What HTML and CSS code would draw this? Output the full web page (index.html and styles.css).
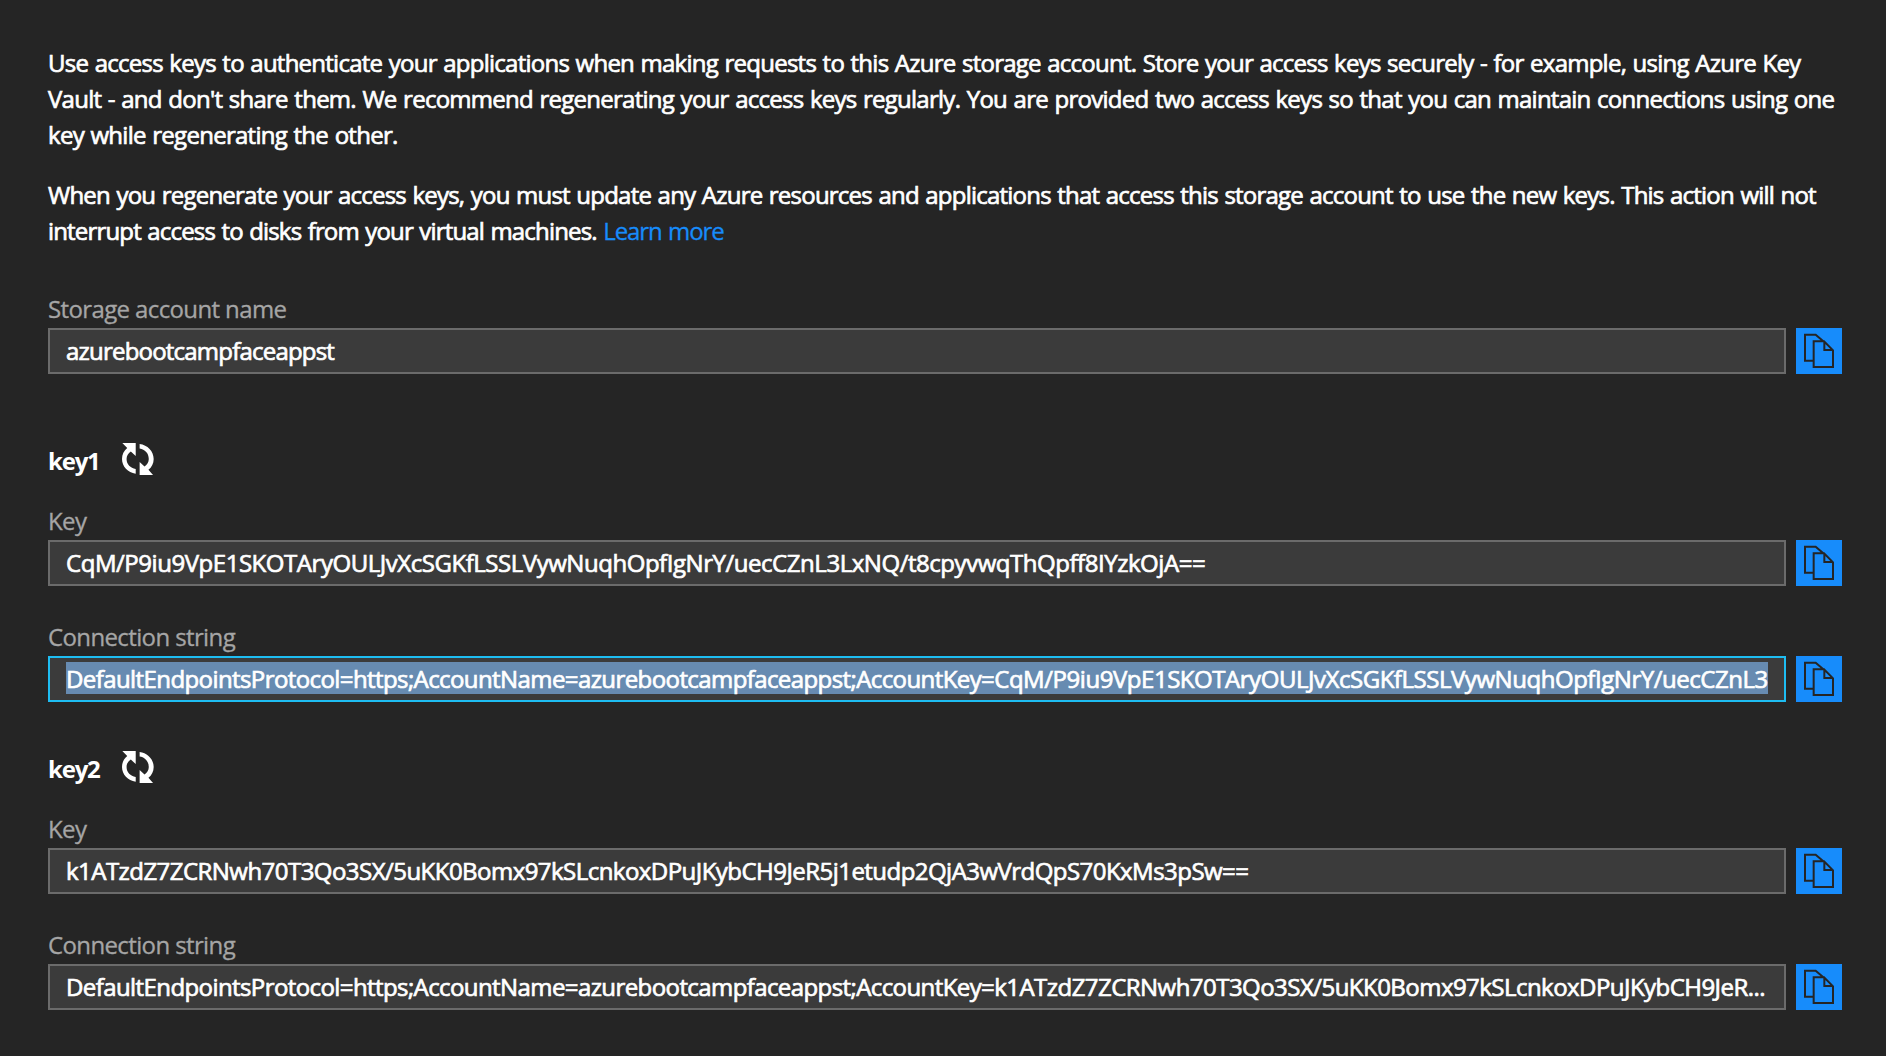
FILE: index.html
```html
<!DOCTYPE html>
<html lang="en">
<head>
<meta charset="utf-8">
<title>Access keys</title>
<link rel="stylesheet" href="styles.css">
</head>
<body>
<svg class="symbols" aria-hidden="true">
  <symbol id="copy" viewBox="0 0 138 138">
    <path d="M52 98H27V20H59L82 40M53 40V117H111V67L84 40ZM85 40V66H111" fill="none" stroke="#252525" stroke-width="6"/>
  </symbol>
  <symbol id="refresh" viewBox="36 38 98 98">
    <path d="M37 38H78V78L63 64C55 69 50 77 50 87C50 103 62 115 78 118V132C54 129 36 110 36 87C36 73 42 61 52 53Z"/>
    <path d="M90 41C114 44 133 63 133 87C133 101 127 112 117 120L131 136H90V96L105 110C113 105 118 97 118 87C118 70 106 57 90 55Z"/>
  </symbol>
</svg>
<main class="panel">
  <section class="intro">
    <p><span class="line line-a">Use access keys to authenticate your applications when making requests to this Azure storage account. Store your access keys securely - for example, using Azure Key</span>
    <span class="line line-b">Vault - and don't share them. We recommend regenerating your access keys regularly. You are provided two access keys so that you can maintain connections using one</span>
    <span class="line line-c">key while regenerating the other.</span></p>
    <p><span class="line line-d">When you regenerate your access keys, you must update any Azure resources and applications that access this storage account to use the new keys. This action will not</span>
    <span class="line line-e">interrupt access to disks from your virtual machines. <a class="link" href="#">Learn more</a></span></p>
  </section>

  <section class="account">
    <div class="field">
      <label class="label">Storage account name</label>
      <div class="row"><div class="box"><div class="value account-name">azurebootcampfaceappst</div></div><button class="copy" aria-label="Copy"><svg><use href="#copy"/></svg></button></div>
    </div>
  </section>

  <section class="key-group">
    <h2 class="heading"><span>key1</span><svg class="refresh"><use href="#refresh"/></svg></h2>
    <div class="field">
      <label class="label">Key</label>
      <div class="row"><div class="box"><div class="value key-one">CqM/P9iu9VpE1SKOTAryOULJvXcSGKfLSSLVywNuqhOpfIgNrY/uecCZnL3LxNQ/t8cpyvwqThQpff8IYzkOjA==</div></div><button class="copy" aria-label="Copy"><svg><use href="#copy"/></svg></button></div>
    </div>
    <div class="field">
      <label class="label">Connection string</label>
      <div class="row"><div class="box active"><div class="value selected"><span class="prefix">DefaultEndpointsProtocol=https;AccountName=azurebootcampfaceappst;AccountKey=</span><span class="key-one">CqM/P9iu9VpE1SKOTAryOULJvXcSGKfLSSLVywNuqhOpfIgNrY/uecCZnL3</span></div></div><button class="copy" aria-label="Copy"><svg><use href="#copy"/></svg></button></div>
    </div>
  </section>

  <section class="key-group">
    <h2 class="heading"><span>key2</span><svg class="refresh"><use href="#refresh"/></svg></h2>
    <div class="field">
      <label class="label">Key</label>
      <div class="row"><div class="box"><div class="value key-two">k1ATzdZ7ZCRNwh70T3Qo3SX/5uKK0Bomx97kSLcnkoxDPuJKybCH9JeR5j1etudp2QjA3wVrdQpS70KxMs3pSw==</div></div><button class="copy" aria-label="Copy"><svg><use href="#copy"/></svg></button></div>
    </div>
    <div class="field">
      <label class="label">Connection string</label>
      <div class="row"><div class="box"><div class="value"><span class="prefix">DefaultEndpointsProtocol=https;AccountName=azurebootcampfaceappst;AccountKey=</span><span class="key-two">k1ATzdZ7ZCRNwh70T3Qo3SX/5uKK0Bomx97kSLcnkoxDPuJKybCH9JeR...</span></div></div><button class="copy" aria-label="Copy"><svg><use href="#copy"/></svg></button></div>
    </div>
  </section>
</main>
</body>
</html>
```
FILE: styles.css
```css
* { box-sizing: border-box; }

body {
  margin: 0;
  background: #252525;
  color: #fff;
  font: 400 24px/36px "Open Sans", "Noto Sans", sans-serif;
  letter-spacing: -0.62px;
}

.symbols { display: none; }

.panel {
  min-height: 1056px;
  padding: 45px 44px 0 48px;
}

.intro {
  display: flex;
  flex-direction: column;
  gap: 24px;
  margin-bottom: 44px;
  word-spacing: 1px;
  -webkit-text-stroke: 0.7px currentColor;
}
.intro p { margin: 0; }
.line { display: block; white-space: nowrap; }
.line-a { letter-spacing: -0.751px; }
.line-b { letter-spacing: -0.738px; }
.line-c { letter-spacing: -0.725px; }
.line-d { letter-spacing: -0.776px; }
.line-e { letter-spacing: -0.83px; }
.link {
  color: #178cfb;
  text-decoration: none;
  letter-spacing: -1.05px;
  -webkit-text-stroke: 0.3px currentColor;
}

.account { margin-bottom: 69px; }
.key-group { margin-bottom: 49px; }

.heading {
  display: flex;
  align-items: flex-start;
  height: 32px;
  margin: 0 0 30px;
  font-size: 24px;
  font-weight: 700;
  line-height: 35px;
  letter-spacing: -1.2px;
}
.heading span { width: 74px; }
.refresh { width: 32px; height: 32px; fill: #fff; }

.field + .field { margin-top: 35px; }
.label {
  display: block;
  height: 35px;
  color: #a5a5a5;
  line-height: 32px;
  -webkit-text-stroke: 0.3px currentColor;
}
.row { display: flex; gap: 10px; }
.box {
  flex: 1;
  min-width: 0;
  height: 46px;
  padding: 4px 16px;
  border: 2px solid #6b6b6b;
  background: #3b3b3b;
}
.box.active { border-color: #1ebdf2; }
.value {
  height: 32px;
  line-height: 34px;
  white-space: nowrap;
  -webkit-text-stroke: 0.7px currentColor;
}
.selected { background: #678bb1; }
.account-name { letter-spacing: -0.79px; }
.prefix { letter-spacing: -0.59px; }
.key-one { letter-spacing: -0.46px; }
.key-two { letter-spacing: -0.54px; }

.copy {
  width: 46px;
  height: 46px;
  padding: 0;
  border: 0;
  background: #178cfb;
}
.copy svg { display: block; width: 46px; height: 46px; }
```
